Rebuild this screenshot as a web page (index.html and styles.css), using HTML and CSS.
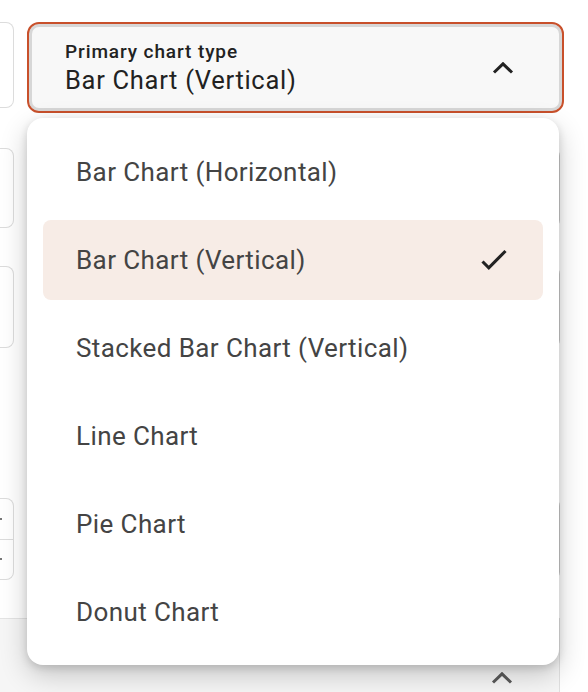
FILE: index.html
```html
<!DOCTYPE html>
<html lang="en">
<head>
<meta charset="utf-8">
<title>Chart type select</title>
<link rel="stylesheet" href="styles.css">
</head>
<body>
<div class="page">
  <div class="row row-a">
    <div class="side-box side-a"></div>
    <div class="select-wrap">
      <div class="select" role="combobox" aria-expanded="true">
        <div class="select-text">
          <span class="select-label">Primary chart type</span>
          <span class="select-value">Bar Chart (Vertical)</span>
        </div>
        <svg class="chev" width="22" height="12" viewBox="0 0 22 12" aria-hidden="true"><polyline points="2,10.5 11,1.8 20,10.5" fill="none" stroke="#222" stroke-width="3" stroke-linejoin="miter"/></svg>
      </div>
      <ul class="menu" role="listbox">
        <li class="item">Bar Chart (Horizontal)</li>
        <li class="item selected">Bar Chart (Vertical)<svg class="check" width="30" height="26" viewBox="0 0 30 26" aria-hidden="true"><polyline points="3.5,14.5 9.8,20.8 26.5,4" fill="none" stroke="#222" stroke-width="3.1"/></svg></li>
        <li class="item">Stacked Bar Chart (Vertical)</li>
        <li class="item">Line Chart</li>
        <li class="item">Pie Chart</li>
        <li class="item">Donut Chart</li>
      </ul>
    </div>
  </div>
  <div class="row row-b">
    <div class="side-box"></div>
    <div class="field"></div>
  </div>
  <div class="row row-c">
    <div class="side-box"></div>
    <div class="field"></div>
  </div>
  <div class="row row-d">
    <div class="side-box stepper">
      <div class="step"><span class="dot"></span></div>
      <div class="step"><span class="dot"></span></div>
    </div>
    <div class="field"></div>
  </div>
  <div class="section">
    <svg class="sec-chev" width="22" height="12" viewBox="0 0 22 12" aria-hidden="true"><polyline points="2,10.5 11,1.8 20,10.5" fill="none" stroke="#5a5a5a" stroke-width="3"/></svg>
  </div>
</div>
</body>
</html>
```
FILE: styles.css
```css
* { box-sizing: border-box; }
html, body {
  margin: 0;
  padding: 0;
  background: #ffffff;
  overflow: hidden;
  height: 692px;
}
body {
  font-family: Roboto, "Noto Sans", Arial, sans-serif;
  color: #222;
}
.page {
  display: flex;
  flex-direction: column;
  padding-top: 22px;
}
.row {
  display: grid;
  grid-template-columns: 14px 537px;
  column-gap: 13px;
  align-items: start;
}
.row-b { margin-top: 35px; }
.row-c { margin-top: 38px; }
.row-d { margin-top: 150px; }

.side-box {
  border: 1px solid #dcdcdc;
  border-left: none;
  border-radius: 0 8px 8px 0;
  background: #fff;
}
.side-a { height: 86px; }
.row-b .side-box, .row-b .field { height: 80px; }
.row-c .side-box, .row-c .field { height: 82px; }
.row-d .side-box, .row-d .field { height: 82px; }

.field {
  width: 533px;
  border: 1px solid #c8c8c8;
  border-right-width: 2px;
  border-radius: 8px;
  background: #fff;
}

.stepper {
  display: flex;
  flex-direction: column;
}
.step {
  flex: 1;
  display: flex;
  align-items: center;
}
.step + .step { border-top: 1px solid #dcdcdc; }
.dot {
  width: 2px;
  height: 2px;
  background: #777;
}

.select-wrap { position: relative; }
.select {
  height: 91px;
  display: flex;
  align-items: center;
  justify-content: space-between;
  border: 2px solid #c8502b;
  border-radius: 12px;
  background: #f8f8f8;
  box-shadow: inset 0 0 0 3px #d7d7d7;
  padding: 17px 48px 16px 36px;
}
.select-text {
  display: flex;
  flex-direction: column;
  gap: 2px;
}
.select-label {
  font-size: 19px;
  line-height: 22px;
  font-weight: 500;
  letter-spacing: 0.9px;
  color: #222;
}
.select-value {
  font-size: 25.5px;
  line-height: 30px;
  letter-spacing: 0.7px;
  color: #222;
}
.chev { display: block; }

.menu {
  position: absolute;
  top: calc(100% + 5px);
  left: 0;
  width: 532px;
  margin: 0;
  list-style: none;
  background: #fff;
  border-radius: 16px;
  padding: 14px 16px 13px;
  display: flex;
  flex-direction: column;
  gap: 8px;
  box-shadow: 0 10px 28px rgba(0,0,0,0.2), 0 3px 8px rgba(0,0,0,0.14);
  z-index: 5;
}
.item {
  height: 80px;
  display: flex;
  align-items: center;
  justify-content: space-between;
  padding: 0 34px 0 33px;
  border-radius: 8px;
  font-size: 26px;
  letter-spacing: 0.4px;
  color: #444;
}
.item.selected { background: #f7ece6; }
.check { display: block; }

.section {
  margin-top: 38px;
  width: 560px;
  height: 74px;
  border-top: 1px solid #e4e4e4;
  border-right: 1px solid #e0e0e0;
  background: #f6f6f6;
  display: flex;
  justify-content: flex-end;
  align-items: flex-start;
  padding: 53px 46px 0 0;
}
.sec-chev { display: block; }
```
